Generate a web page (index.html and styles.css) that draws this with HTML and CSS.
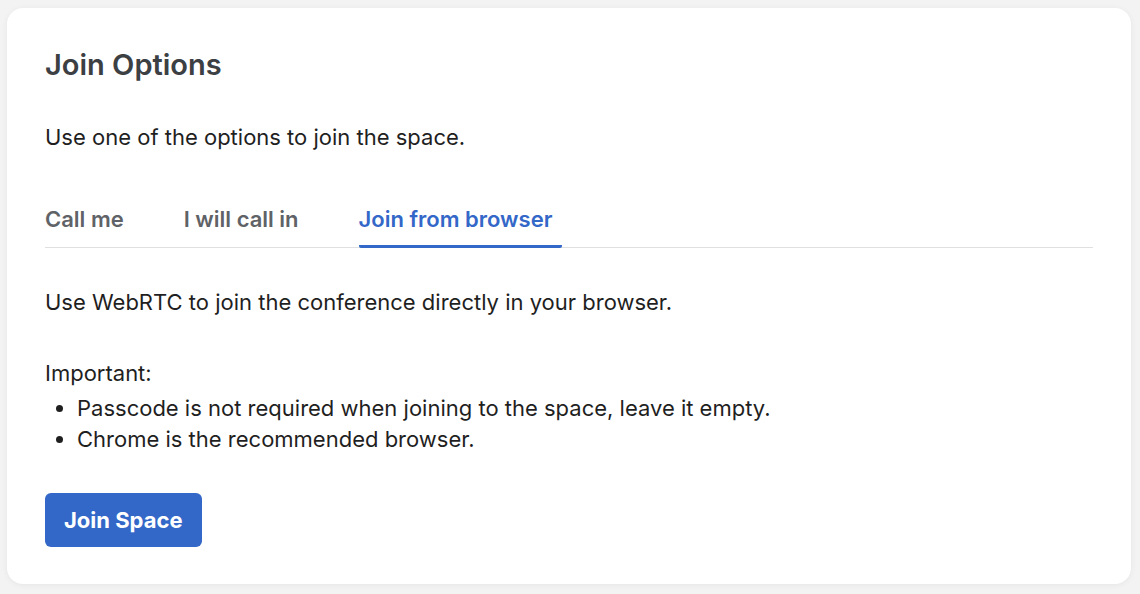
FILE: index.html
```html
<!DOCTYPE html>
<html lang="en">
<head>
    <meta charset="UTF-8">
    <meta name="viewport" content="width=device-width, initial-scale=1.0">
    <title>Join Options</title>
    <link rel="stylesheet" href="styles.css">
</head>
<body>
    <div class="card">
        <h2 class="card-title">Join Options</h2>
        <p class="intro">Use one of the options to join the space.</p>

        <div class="tabs">
            <a href="#" class="tab">Call me</a>
            <a href="#" class="tab">I will call in</a>
            <a href="#" class="tab active">Join from browser</a>
        </div>

        <div class="tab-panel">
            <p class="panel-text">Use WebRTC to join the conference directly in your browser.</p>
            <p class="important">Important:</p>
            <ul class="notes">
                <li>Passcode is not required when joining to the space, leave it empty.</li>
                <li>Chrome is the recommended browser.</li>
            </ul>
            <button class="join-btn">Join Space</button>
        </div>
    </div>
</body>
</html>
```

FILE: styles.css
```css
body {
    margin: 0;
    padding: 8px 9px 10px 7px;
    background-color: #f3f3f3;
    font-family: 'Inter', sans-serif;
    color: #1f1f1f;
}

.card {
    background-color: #fff;
    border-radius: 16px;
    box-shadow: 0 1px 6px rgba(0, 0, 0, 0.06);
    padding: 40px 38px 37px 38px;
}

.card-title {
    margin: 0;
    font-size: 29px;
    font-weight: 600;
    color: #3c4043;
    line-height: 34px;
}

.intro {
    margin: 40px 0 0 0;
    font-size: 22px;
    line-height: 30px;
}

.tabs {
    display: flex;
    gap: 50px;
    margin-top: 47px;
    border-bottom: 1px solid #e0e0e0;
}

.tab {
    font-size: 22px;
    font-weight: 600;
    line-height: 30px;
    color: #5f6368;
    text-decoration: none;
    padding: 5px 10px 11px 0;
    border-bottom: 3px solid transparent;
    margin-bottom: -1px;
}

.tab.active {
    color: #3367c8;
    border-bottom-color: #3367c8;
    border-radius: 2px;
}

.panel-text {
    margin: 39px 0 0 0;
    font-size: 22px;
    line-height: 30px;
}

.important {
    margin: 41px 0 0 0;
    font-size: 22px;
    line-height: 31px;
}

.notes {
    margin: 4px 0 0 0;
    padding-left: 32px;
    font-size: 22px;
    line-height: 31px;
}

.join-btn {
    margin-top: 38px;
    background-color: #3367c8;
    color: #fff;
    border: none;
    border-radius: 6px;
    font-family: 'Inter', sans-serif;
    font-size: 22px;
    font-weight: 700;
    padding: 0 19px;
    height: 54px;
    cursor: pointer;
}
```
